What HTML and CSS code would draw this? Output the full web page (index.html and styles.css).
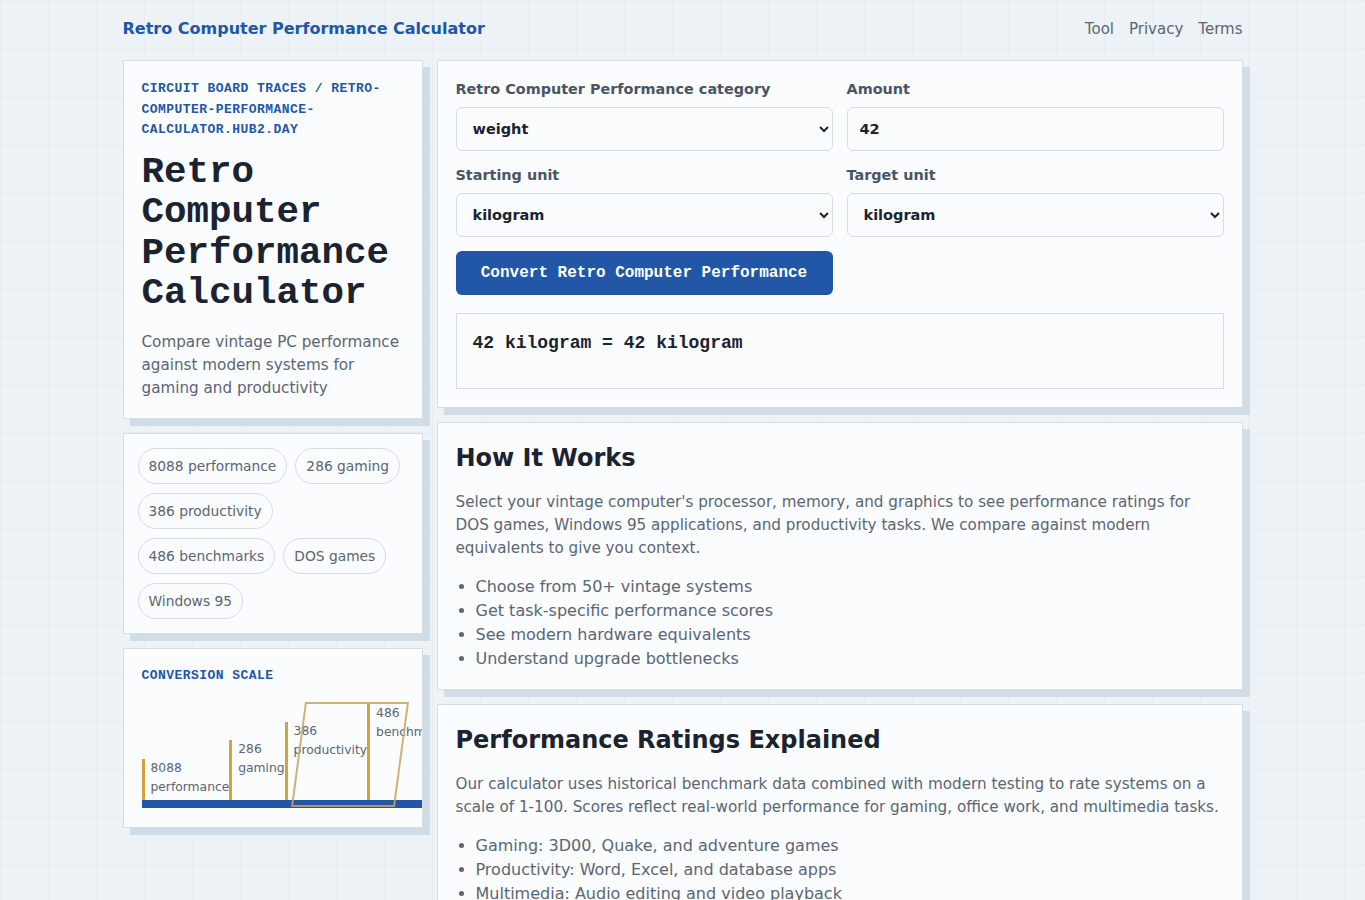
FILE: index.html
```html
<!DOCTYPE html>
<html lang="en">
<head>
    <meta charset="UTF-8">
    <meta name="viewport" content="width=device-width, initial-scale=1.0">
    <title>Retro Computer Performance Calculator</title>
    <link rel="stylesheet" href="styles.css">
</head>
<body>
    <div class="page">
        <header class="site-header">
            <a class="brand" href="#">Retro Computer Performance Calculator</a>
            <nav class="site-nav">
                <a href="#">Tool</a>
                <a href="#">Privacy</a>
                <a href="#">Terms</a>
            </nav>
        </header>

        <div class="layout">
            <aside class="sidebar">
                <section class="card intro">
                    <p class="eyebrow">Circuit board traces / retro-computer-performance-calculator.hub2.day</p>
                    <h1>Retro Computer Performance Calculator</h1>
                    <p class="lead">Compare vintage PC performance against modern systems for gaming and productivity</p>
                </section>

                <section class="card tags">
                    <span class="tag">8088 performance</span>
                    <span class="tag">286 gaming</span>
                    <span class="tag">386 productivity</span>
                    <span class="tag">486 benchmarks</span>
                    <span class="tag">DOS games</span>
                    <span class="tag">Windows 95</span>
                </section>

                <section class="card scale-card">
                    <p class="eyebrow">Conversion scale</p>
                    <div class="scale">
                        <div class="step" style="height: 41px">8088 performance</div>
                        <div class="step" style="height: 60px">286 gaming</div>
                        <div class="step" style="height: 78px">386 productivity</div>
                        <div class="step" style="height: 96px">486 benchmarks</div>
                        <div class="step" style="height: 96px">DOS games</div>
                        <span class="scale-window"></span>
                    </div>
                </section>
            </aside>

            <main class="content">
                <section class="card converter">
                    <div class="form-grid">
                        <div class="field">
                            <label for="category">Retro Computer Performance category</label>
                            <select id="category">
                                <option>weight</option>
                                <option>length</option>
                                <option>volume</option>
                            </select>
                        </div>
                        <div class="field">
                            <label for="amount">Amount</label>
                            <input type="number" id="amount" value="42">
                        </div>
                        <div class="field">
                            <label for="fromUnit">Starting unit</label>
                            <select id="fromUnit">
                                <option>kilogram</option>
                                <option>gram</option>
                                <option>pound</option>
                            </select>
                        </div>
                        <div class="field">
                            <label for="toUnit">Target unit</label>
                            <select id="toUnit">
                                <option>kilogram</option>
                                <option>gram</option>
                                <option>pound</option>
                            </select>
                        </div>
                        <button class="convert-btn" type="button">Convert Retro Computer Performance</button>
                    </div>
                    <div class="result" id="result">42 kilogram = 42 kilogram</div>
                </section>

                <section class="card article">
                    <h2>How It Works</h2>
                    <p>Select your vintage computer's processor, memory, and graphics to see performance ratings for DOS games, Windows 95 applications, and productivity tasks. We compare against modern equivalents to give you context.</p>
                    <ul>
                        <li>Choose from 50+ vintage systems</li>
                        <li>Get task-specific performance scores</li>
                        <li>See modern hardware equivalents</li>
                        <li>Understand upgrade bottlenecks</li>
                    </ul>
                </section>

                <section class="card article">
                    <h2>Performance Ratings Explained</h2>
                    <p>Our calculator uses historical benchmark data combined with modern testing to rate systems on a scale of 1-100. Scores reflect real-world performance for gaming, office work, and multimedia tasks.</p>
                    <ul>
                        <li>Gaming: 3D00, Quake, and adventure games</li>
                        <li>Productivity: Word, Excel, and database apps</li>
                        <li>Multimedia: Audio editing and video playback</li>
                        <li>Upgrades: Which part limits your system most</li>
                    </ul>
                </section>
            </main>
        </div>
    </div>
</body>
</html>
```

FILE: styles.css
```css
:root {
    --blue: #2256a6;
    --gold: #d3a23c;
    --bg: #edf2f6;
    --surface: #fafcfd;
    --line: #d5dde5;
    --ink: #1b2330;
    --muted: #5b6573;
    --label: #4a5462;
    --shadow: 7px 7px 0 #d0dde7;
    --mono: "Liberation Mono", "DejaVu Sans Mono", monospace;
}

* {
    box-sizing: border-box;
    margin: 0;
    padding: 0;
}

body {
    font-family: "DejaVu Sans", Verdana, sans-serif;
    color: var(--ink);
    background-color: var(--bg);
    background-image:
        linear-gradient(rgba(205, 218, 230, 0.22) 1px, transparent 1px),
        linear-gradient(90deg, rgba(205, 218, 230, 0.22) 1px, transparent 1px);
    background-size: 48px 48px;
    min-height: 100vh;
}

.page {
    width: 1120px;
    margin: 0 auto;
}

/* Header */
.site-header {
    display: flex;
    justify-content: space-between;
    align-items: center;
    padding-top: 18px;
    margin-bottom: 20px;
    line-height: 22px;
}

.brand {
    color: var(--blue);
    font-weight: 700;
    font-size: 16px;
    text-decoration: none;
}

.site-nav {
    display: flex;
    gap: 15px;
}

.site-nav a {
    color: var(--muted);
    text-decoration: none;
    font-size: 15px;
}

/* Layout */
.layout {
    display: grid;
    grid-template-columns: 300px 1fr;
    gap: 14px;
    align-items: start;
}

.sidebar,
.content {
    display: flex;
    flex-direction: column;
    gap: 14px;
}

.card {
    background: var(--surface);
    border: 1px solid var(--line);
    box-shadow: var(--shadow);
    padding: 18px;
}

.eyebrow {
    font-family: var(--mono);
    font-weight: 700;
    font-size: 13px;
    letter-spacing: 0.45px;
    line-height: 20.5px;
    text-transform: uppercase;
    color: var(--blue);
}

/* Intro card */
.intro h1 {
    font-family: var(--mono);
    font-size: 37.5px;
    line-height: 40.5px;
    font-weight: 700;
    margin-top: 11px;
    color: var(--ink);
}

.lead {
    margin-top: 17px;
    font-size: 15.2px;
    line-height: 23px;
    color: var(--muted);
}

/* Tags */
.tags {
    display: flex;
    flex-wrap: wrap;
    gap: 9px 8px;
    padding: 14px;
}

.tag {
    border: 1px solid var(--line);
    border-radius: 999px;
    padding: 7px 10px;
    font-size: 13.8px;
    line-height: 20px;
    color: var(--muted);
    background: var(--surface);
}

/* Conversion scale */
.scale-card {
    overflow: hidden;
    padding-top: 17px;
    padding-bottom: 19px;
}

.scale {
    position: relative;
    display: flex;
    align-items: flex-end;
    height: 122px;
    margin-right: -18px;
    border-bottom: 8px solid var(--blue);
}

.step {
    flex: none;
    width: min-content;
    border-left: 3px solid var(--gold);
    padding-left: 6px;
    font-size: 12.3px;
    line-height: 19px;
    color: var(--muted);
}

.scale-window {
    position: absolute;
    left: 156px;
    top: 16px;
    width: 104px;
    height: 105px;
    border: 2px solid rgba(200, 165, 95, 0.85);
    transform: skewX(-7.6deg);
}

/* Converter */
.form-grid {
    display: grid;
    grid-template-columns: 1fr 1fr;
    gap: 14px;
}

.field label {
    display: block;
    font-size: 14.4px;
    line-height: 20px;
    font-weight: 700;
    color: var(--label);
    margin-bottom: 8px;
}

.field select,
.field input {
    width: 100%;
    height: 44px;
    border: 1px solid var(--line);
    border-radius: 6px;
    background: var(--surface);
    padding: 0 8px 0 12px;
    font-family: inherit;
    font-size: 14.5px;
    font-weight: 700;
    color: var(--ink);
}

.convert-btn {
    height: 44px;
    border: none;
    border-radius: 6px;
    background: var(--blue);
    color: #ffffff;
    font-family: var(--mono);
    font-weight: 700;
    font-size: 16px;
    cursor: pointer;
}

.result {
    margin-top: 18px;
    min-height: 76px;
    border: 1px solid var(--line);
    background: var(--surface);
    padding: 16px;
    font-family: var(--mono);
    font-weight: 700;
    font-size: 18px;
    line-height: 26px;
    color: var(--ink);
}

/* Articles */
.article h2 {
    font-size: 24px;
    line-height: 34px;
    font-weight: 700;
    color: var(--ink);
}

.article p {
    margin-top: 16px;
    font-size: 15.2px;
    line-height: 23px;
    color: var(--muted);
}

.article ul {
    margin-top: 15px;
    padding-left: 20px;
    font-size: 16px;
    line-height: 24px;
    color: var(--muted);
}
```
